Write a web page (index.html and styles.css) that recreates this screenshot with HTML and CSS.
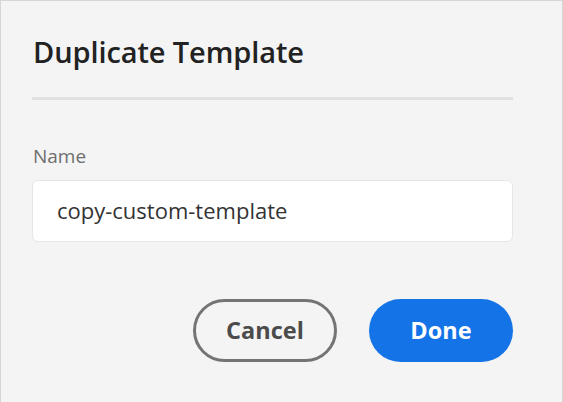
FILE: index.html
```html
<!DOCTYPE html>
<html>
<head>
<meta charset="utf-8">
<link rel="stylesheet" href="styles.css">
</head>
<body>
<div class="dialog">
  <h1 class="title">Duplicate Template</h1>
  <div class="divider"></div>
  <label class="label">Name</label>
  <div class="field">copy-custom-template</div>
  <div class="actions">
    <button class="btn btn-secondary">Cancel</button>
    <button class="btn btn-primary">Done</button>
  </div>
</div>
</body>
</html>
```
FILE: styles.css
```css
html, body {
  margin: 0;
  padding: 0;
  width: 563px;
  height: 402px;
  overflow: hidden;
}
body {
  background: #f4f4f4;
  font-family: "Open Sans", "Noto Sans", sans-serif;
  box-sizing: border-box;
  border: 1px solid #d6d6d6;
  border-bottom: none;
}
.dialog {
  width: 481px;
  padding: 31px 0 0 31px;
  display: flex;
  flex-direction: column;
}
.title {
  margin: 0;
  font-size: 29px;
  font-weight: 600;
  color: #222;
  line-height: 40px;
  padding-left: 1px;
  letter-spacing: -0.1px;
}
.divider {
  height: 3px;
  background: #e1e1e1;
  margin-top: 25px;
}
.label {
  margin-top: 45px;
  font-size: 19px;
  color: #6e6e6e;
  line-height: 22px;
  padding-left: 1px;
}
.field {
  margin-top: 13px;
  height: 62px;
  background: #fff;
  border: 1px solid #e6e6e6;
  border-radius: 6px;
  font-size: 22px;
  color: #333;
  display: flex;
  align-items: center;
  padding-left: 24px;
  padding-bottom: 2px;
  box-sizing: border-box;
}
.actions {
  margin-top: 57px;
  display: flex;
  justify-content: flex-end;
  gap: 32px;
}
.btn {
  width: 144px;
  height: 63px;
  border-radius: 32px;
  font-family: "Open Sans", "Noto Sans", sans-serif;
  font-size: 23.5px;
  font-weight: 700;
  box-sizing: border-box;
  padding: 0 0 2px;
}
.btn-secondary {
  background: transparent;
  border: 3px solid #747474;
  color: #4b4b4b;
}
.btn-primary {
  background: #1473e6;
  border: none;
  color: #fff;
}
```
